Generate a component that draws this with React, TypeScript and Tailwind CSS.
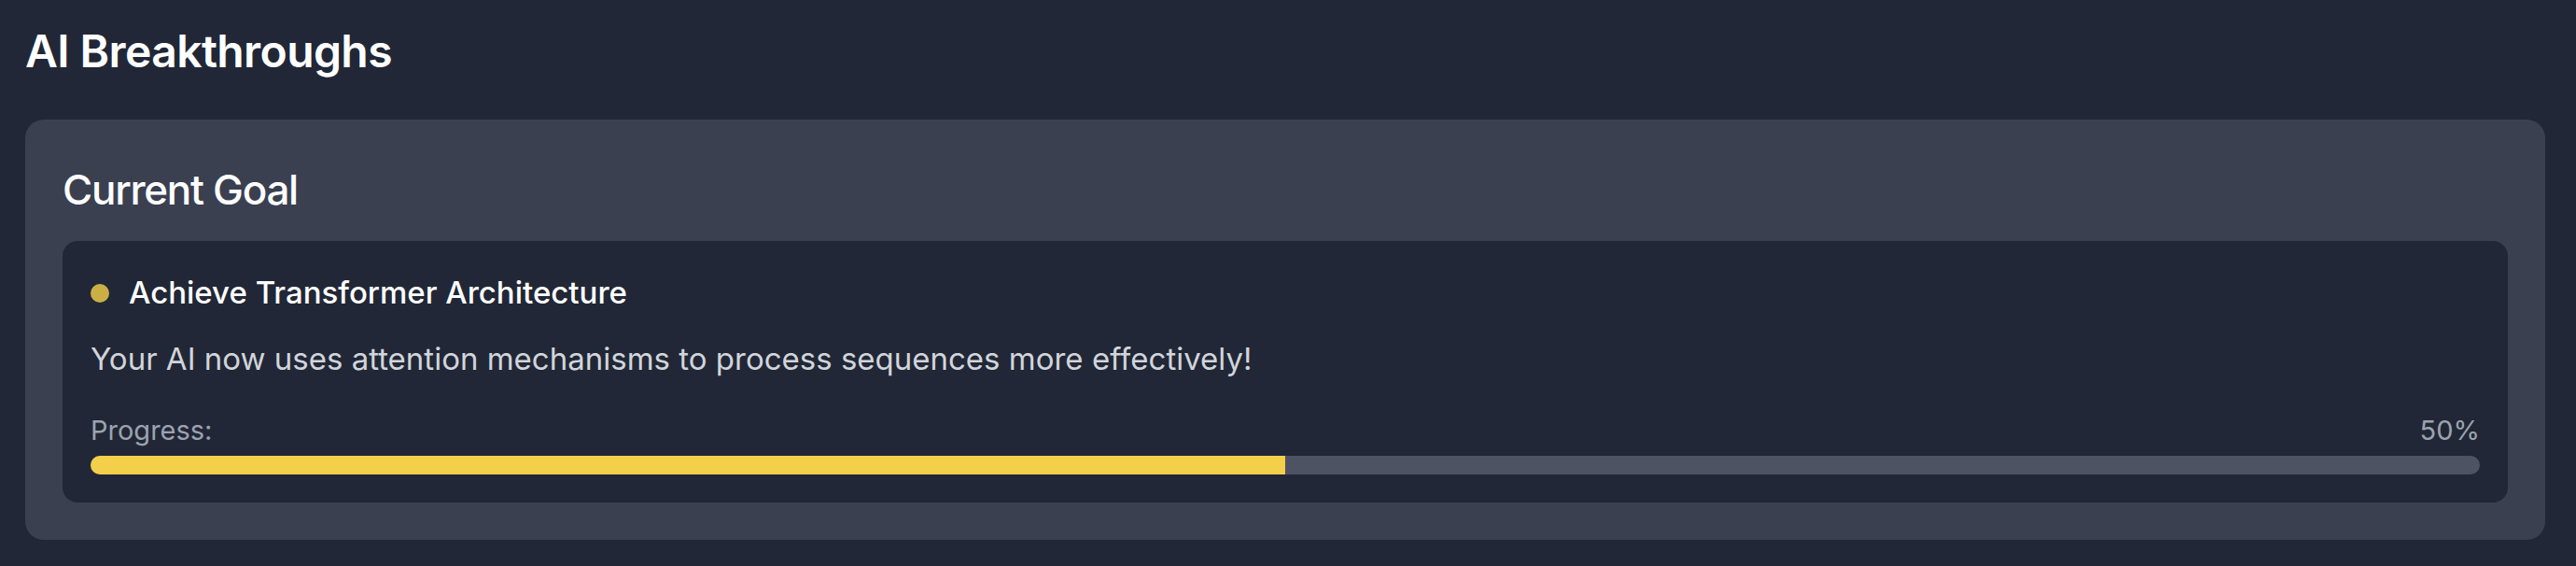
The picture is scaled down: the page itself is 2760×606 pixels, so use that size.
import React from "react";

interface GoalProps {
  title: string;
  description: string;
  progress: number;
}

const GoalCard = (props: GoalProps) => {
  return (
    <div className="rounded-[16px] bg-[#212736] p-[30px]">
      <div className="flex items-center gap-[21px]">
        <span className="h-[20px] w-[20px] shrink-0 rounded-full bg-[#cbaf45]"></span>
        <span className="text-[33px] leading-[51px] font-medium text-white">{props.title}</span>
      </div>
      <p className="mt-[20px] text-[33px] leading-[51px] text-[#d1d5db]">{props.description}</p>
      <div className="mt-[28px] flex justify-between text-[29px] leading-[45px] text-[#9ca3af]">
        <span>Progress:</span>
        <span>{props.progress}%</span>
      </div>
      <div className="mt-[5px] h-[20px] w-full overflow-hidden rounded-full bg-[#4d5362]">
        <div className="h-full bg-[#f3cf4a]" style={{ width: `${props.progress}%` }}></div>
      </div>
    </div>
  );
};

const App = () => {
  return (
    <div
      className="min-h-screen bg-[#212736] pt-[26px] pl-[27px] pr-[33px] pb-[30px]"
      style={{ fontFamily: "Inter, 'Noto Sans', sans-serif" }}
    >
      <h1 className="text-[48px] leading-[58px] font-semibold tracking-[-0.6px] text-white">AI Breakthroughs</h1>
      <div className="mt-[44px] rounded-[20px] bg-[#3a4050] p-[40px]">
        <h2 className="text-[44px] leading-[70px] font-medium tracking-[-1.3px] text-white">Current Goal</h2>
        <div className="mt-[20px]">
          <GoalCard
            title="Achieve Transformer Architecture"
            description="Your AI now uses attention mechanisms to process sequences more effectively!"
            progress={50}
          />
        </div>
      </div>
    </div>
  );
};

export default App;
